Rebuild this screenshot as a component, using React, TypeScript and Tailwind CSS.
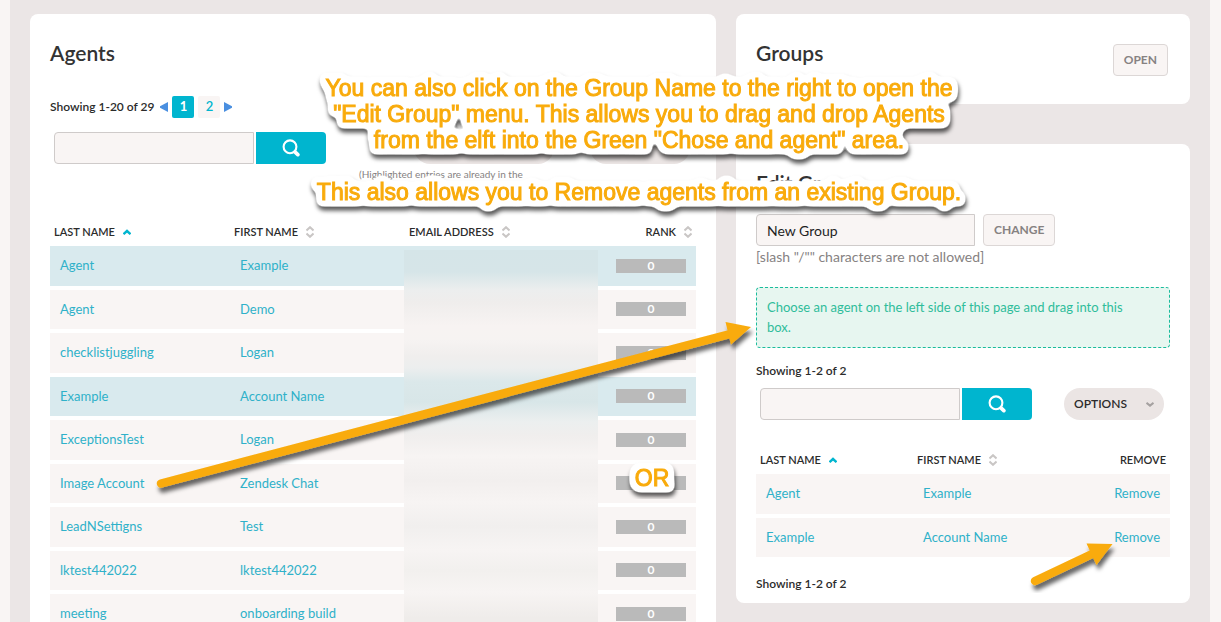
import { ReactNode } from "react";

type Agent = { last: string; first: string; inGroup?: boolean };

const agents: Agent[] = [
  { last: "Agent", first: "Example", inGroup: true },
  { last: "Agent", first: "Demo" },
  { last: "checklistjuggling", first: "Logan" },
  { last: "Example", first: "Account Name", inGroup: true },
  { last: "ExceptionsTest", first: "Logan" },
  { last: "Image Account", first: "Zendesk Chat" },
  { last: "LeadNSettigns", first: "Test" },
  { last: "lktest442022", first: "lktest442022" },
  { last: "meeting", first: "onboarding build" },
];

function SortIcon({ active = false }: { active?: boolean }) {
  if (active) {
    return (
      <svg className="w-2 h-3" viewBox="0 0 8 12" fill="none" stroke="#00b5cf" strokeWidth={2.4}>
        <path d="M0.5 8.2 L4 5 L7.5 8.2" />
      </svg>
    );
  }
  return (
    <svg className="w-2 h-3" viewBox="0 0 8 12" fill="none" stroke="#c9c6c5" strokeWidth={2}>
      <path d="M0.5 4.5 L4 1.2 L7.5 4.5 M0.5 7.5 L4 10.8 L7.5 7.5" />
    </svg>
  );
}

function HeaderCell({ children, className = "" }: { children: ReactNode; className?: string }) {
  return (
    <th scope="col" className={`h-7 px-1 text-[11px] font-semibold text-[#2b2b2b] text-left align-middle ${className}`}>
      {children}
    </th>
  );
}

function SortButton({ label, active }: { label: string; active?: boolean }) {
  return (
    <button type="button" className="inline-flex items-center gap-2 align-middle">
      {label}
      <SortIcon active={active} />
    </button>
  );
}

function SearchBar({ id, label }: { id: string; label: string }) {
  return (
    <form className="flex gap-0.5 pl-1">
      <input
        id={id}
        type="text"
        aria-label={label}
        className="w-[200px] h-8 px-2.5 text-sm bg-[#f9f5f4] border border-[#cfcbca] rounded-l-[4px] outline-none"
      />
      <button type="button" aria-label="Search" className="w-[70px] h-8 flex items-center justify-center bg-[#00b5cf] rounded-r-[4px]">
        <svg className="w-[18px] h-[18px]" viewBox="0 0 18 18" fill="none" stroke="#fff">
          <circle cx="8" cy="7.8" r="6.4" strokeWidth={2.1} />
          <path d="M13.2 13.2 L15.8 15.6" strokeWidth={3.8} strokeLinecap="round" />
        </svg>
      </button>
    </form>
  );
}

function GrayButton({ children }: { children: ReactNode }) {
  return (
    <button type="button" className="h-8 px-2.5 text-xs font-bold text-[#868282] bg-[#f9f5f4] border border-[#dcd7d6] rounded-[4px]">
      {children}
    </button>
  );
}

function Heading({ children }: { children: ReactNode }) {
  return <h2 className="text-[21px] leading-[30px] font-semibold text-[#333]">{children}</h2>;
}

function AgentsCard() {
  return (
    <section className="bg-white rounded-lg px-5 pt-6 pb-5">
      <Heading>Agents</Heading>

      {/* Pager */}
      <div className="mt-6 h-[30px] flex items-center gap-1.5 text-xs font-semibold text-[#2b2b2b]">
        <span>Showing 1-20 of 29</span>
        <nav className="flex items-center gap-1">
          <a href="#prev" aria-label="Previous page">
            <svg className="w-2 h-2.5" viewBox="0 0 8 10" fill="#4a8fe0"><path d="M8 0 V10 L0 5.800 V4.200 Z" /></svg>
          </a>
          <a href="#1" className="w-[22px] h-[22px] flex items-center justify-center rounded-[2px] bg-[#00b5cf] text-white text-[13px] font-bold">1</a>
          <a href="#2" className="w-[22px] h-[22px] flex items-center justify-center rounded-[2px] bg-[#f9f5f4] text-[#00b5cf] text-[13px]">2</a>
          <a href="#next" aria-label="Next page">
            <svg className="w-2 h-2.5" viewBox="0 0 8 10" fill="#4a8fe0"><path d="M0 0 V10 L8 5.800 V4.200 Z" /></svg>
          </a>
        </nav>
      </div>

      <div className="mt-2.5 flex justify-between pr-1.5">
        <SearchBar id="agent-search" label="Search agents" />
        <div className="flex gap-9">
          <button type="button" aria-label="Groups" className="w-[140px] h-8 rounded-full bg-[#ebe5e4]" />
          <button type="button" aria-label="Options" className="w-[100px] h-8 rounded-full bg-[#ebe5e4]" />
        </div>
      </div>
      <p className="mt-[3px] h-[51px] pl-[309px] text-[10px] text-[#868282]">(Highlighted entries are already in the</p>

      <div className="relative">
        <table className="w-full table-fixed border-collapse">
          <colgroup>
            <col className="w-[180px]" />
            <col className="w-[175px]" />
            <col />
            <col className="w-[100px]" />
          </colgroup>
          <thead>
            <tr>
              <HeaderCell><SortButton label="LAST NAME" active /></HeaderCell>
              <HeaderCell><SortButton label="FIRST NAME" /></HeaderCell>
              <HeaderCell><SortButton label="EMAIL ADDRESS" /></HeaderCell>
              <HeaderCell className="text-right"><SortButton label="RANK" /></HeaderCell>
            </tr>
          </thead>
          <tbody>
            {agents.map((agent, i) => (
              <tr key={i} className={agent.inGroup ? "bg-[#d9eaee]" : "bg-[#f9f5f4]"}>
                <td className="px-2.5 py-2.5 text-[13px] leading-normal border-b-4 border-white">
                  <a href="#agent" className="text-[#2fb1c9]">{agent.last}</a>
                </td>
                <td className="px-2.5 py-2.5 text-[13px] leading-normal border-b-4 border-white">
                  <a href="#agent" className="text-[#2fb1c9]">{agent.first}</a>
                </td>
                <td className="border-b-4 border-white" />
                <td className="px-2.5 border-b-4 border-white">
                  <div className="w-[70px] h-3.5 ml-auto bg-[#bababa] text-center text-xs leading-[13px] font-bold text-white">0</div>
                </td>
              </tr>
            ))}
          </tbody>
        </table>
        {/* Smudge over the e-mail addresses */}
        <div className="absolute left-[354px] right-[98px] top-8 bottom-0 bg-[linear-gradient(to_bottom,#d5e5e8_0px,#d6e5e8_22px,#eceeee_40px,#efedec_52px,#f7f3f2_76px,#f6f3f2_90px,#f0eeed_106px,#eceeee_118px,#dbe8ea_132px,#d8e6e8_152px,#ecefef_172px,#f0eeed_186px,#f7f4f3_206px,#f2efee_230px,#f7f4f3_252px,#f1efee_276px,#f7f4f3_300px,#f2f0ee_320px,#f7f4f3_342px,#efecea_368px)]" />
      </div>
    </section>
  );
}

function GroupsCard() {
  return (
    <section className="bg-white rounded-lg pt-6 pb-5 pl-5 pr-[22px] h-[90px] flex justify-between">
      <Heading>Groups</Heading>
      <div className="pt-1.5">
        <GrayButton>OPEN</GrayButton>
      </div>
    </section>
  );
}

const members: Agent[] = [
  { last: "Agent", first: "Example" },
  { last: "Example", first: "Account Name" },
];

function EditGroupCard() {
  return (
    <section className="bg-white rounded-lg px-5 pt-6 pb-2.5">
      <Heading>Edit Group</Heading>
      <div className="mt-4 flex gap-2">
        <input
          type="text"
          aria-label="Group name"
          defaultValue="New Group"
          className="w-[219px] h-8 px-2.5 text-sm text-[#1f1f1f] bg-[#f9f5f4] border border-[#cfcbca] rounded-l-[4px] outline-none"
        />
        <GrayButton>CHANGE</GrayButton>
      </div>
      <p className="text-sm leading-[21px] text-[#868282]">[slash "/"" characters are not allowed]</p>

      <div className="mt-5 pl-2.5 pr-8 py-[9px] h-[61px] text-[13px] leading-5 text-[#2fbd9b] bg-[#e7f6f0] border border-dashed border-[#1abc9c] rounded-[4px]">
        Choose an agent on the left side of this page and drag into this box.
      </div>

      <p className="mt-3.5 leading-[18px] text-xs font-semibold text-[#2b2b2b]">Showing 1-2 of 2</p>
      <div className="mt-2 flex justify-between pr-1.5">
        <SearchBar id="member-search" label="Search group members" />
        <button type="button" className="w-[100px] h-8 px-2.5 flex items-center justify-between rounded-full bg-[#ebe5e4] text-xs font-semibold text-[#2b2b2b]">
          OPTIONS
          <svg className="w-2 h-2" viewBox="0 0 8 8" fill="none" stroke="#a5a1a0" strokeWidth={2}><path d="M0.5 2.8 L4 5.6 L7.5 2.8" /></svg>
        </button>
      </div>

      <table className="mt-[26px] w-full table-fixed border-collapse">
        <colgroup>
          <col className="w-[157px]" />
          <col />
          <col className="w-[100px]" />
        </colgroup>
        <thead>
          <tr>
            <HeaderCell><SortButton label="LAST NAME" active /></HeaderCell>
            <HeaderCell><SortButton label="FIRST NAME" /></HeaderCell>
            <HeaderCell className="text-right">REMOVE</HeaderCell>
          </tr>
        </thead>
        <tbody>
          {members.map((m, i) => (
            <tr key={i} className="bg-[#f9f5f4] text-[13px] leading-normal">
              <td className="px-2.5 py-2.5 border-b-4 border-white"><a href="#agent" className="text-[#2fb1c9]">{m.last}</a></td>
              <td className="px-2.5 py-2.5 border-b-4 border-white"><a href="#agent" className="text-[#2fb1c9]">{m.first}</a></td>
              <td className="px-2.5 py-2.5 border-b-4 border-white text-right"><a href="#remove" className="text-[#2fb1c9]">Remove</a></td>
            </tr>
          ))}
        </tbody>
      </table>
      <p className="mt-3.5 leading-[18px] text-xs font-semibold text-[#2b2b2b]">Showing 1-2 of 2</p>
    </section>
  );
}

/* Notes and arrows drawn on top of the page */
function Annotations() {
  return (
    <div className="absolute inset-0 pointer-events-none font-['Liberation_Sans',sans-serif] text-[23px] leading-[26px] text-[#f9ab0b] text-center">
      <svg className="absolute left-0 top-0" width="1221" height="622" viewBox="0 0 1221 622">
        <defs>
          <filter id="halo" x="-10%" y="-30%" width="120%" height="160%" colorInterpolationFilters="sRGB">
            <feMorphology in="SourceAlpha" operator="dilate" radius="4" />
            <feGaussianBlur stdDeviation="3" />
            <feComponentTransfer result="spread">
              <feFuncA type="linear" slope="8" intercept="-1.6" />
            </feComponentTransfer>
            <feFlood floodColor="#fff" />
            <feComposite in2="spread" operator="in" result="white" />
            <feDropShadow in="white" dx="1" dy="4" stdDeviation="2" floodColor="#000" floodOpacity="0.65" result="base" />
            <feMerge>
              <feMergeNode in="base" />
              <feMergeNode in="SourceGraphic" />
            </feMerge>
          </filter>
          <filter id="arrow-shadow" x="-10%" y="-20%" width="120%" height="150%">
            <feDropShadow dx="2" dy="5" stdDeviation="2" floodColor="#000" floodOpacity="0.6" />
          </filter>
        </defs>
        <g fill="#f9ab0b" stroke="#f9ab0b" filter="url(#arrow-shadow)">
          <path d="M161 483.500 L730 334" fill="none" strokeWidth={8.500} strokeLinecap="round" />
          <path d="M725.500 322 L751 327 L731 344.500 Z" stroke="none" />
        </g>
        <g fill="#f9ab0b" stroke="#f9ab0b" filter="url(#arrow-shadow)">
          <path d="M1035 581 L1092 554" fill="none" strokeWidth={8.500} strokeLinecap="round" />
          <path d="M1086.500 543.500 L1112.500 544 L1096.500 565 Z" stroke="none" />
        </g>
      </svg>
      <p className="absolute left-[279px] top-[75px] w-[720px] [-webkit-text-stroke:1px_#f9ab0b] [filter:url(#halo)]">
        You can also click on the Group Name to the right to open the<br />
        "Edit Group" menu. This allows you to drag and drop Agents<br />
        from the elft into the Green "Chose and agent" area.<br />
        <br />
        This also allows you to Remove agents from an existing Group.
      </p>
      <p className="absolute left-[602px] top-[465px] w-[100px] [-webkit-text-stroke:1px_#f9ab0b] [filter:url(#halo)]">OR</p>
    </div>
  );
}

export default function App() {
  return (
    <div className="relative h-screen overflow-hidden bg-[#f9f5f4] pl-2.5 pr-[11px] font-[Lato,sans-serif]">
      <main className="min-h-full bg-[#ebe6e6] px-5 pt-3.5 pb-5 grid grid-cols-[686fr_454fr] gap-5 items-start">
        <AgentsCard />
        <div className="flex flex-col gap-10">
          <GroupsCard />
          <EditGroupCard />
        </div>
      </main>
      <Annotations />
    </div>
  );
}
